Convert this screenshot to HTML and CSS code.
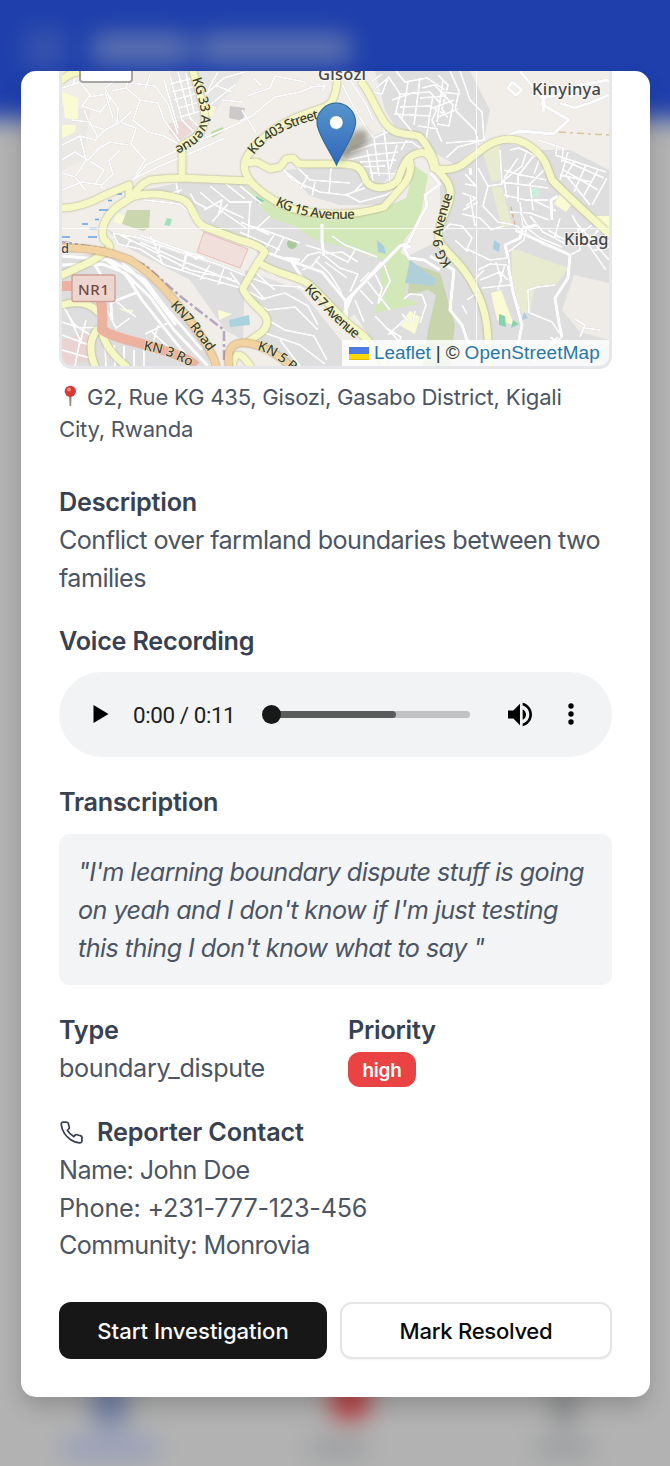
FILE: index.html
```html
<!DOCTYPE html>
<html lang="en">
<head>
<meta charset="utf-8">
<title>Report details</title>
<link rel="stylesheet" href="styles.css">
</head>
<body>
<div class="screen">
  <div class="backdrop" aria-hidden="true">
    <div class="app-header"><span class="ghost-logo"></span><span class="ghost-word short"></span><span class="ghost-word"></span></div>
    <div class="app-body"></div>
    <div class="app-nav">
      <div class="tab active"><i></i><b></b></div>
      <div class="tab alert"><i></i><b></b></div>
      <div class="tab"><i></i><b></b></div>
    </div>
  </div>

  <main class="modal">
    <div class="map">
      <svg class="tiles" viewBox="62 71 547 295" preserveAspectRatio="none">
        <rect x="62" y="71" width="547" height="295" fill="#f1eeea"/>
        <!-- built-up areas -->
        <g fill="#dfdedf">
          <path d="M170 71L245 71 236 84 220 104 210 120 180 140 172 120z" opacity=".5"/>
          <path d="M375 71H470L490 110 484 140 455 165 430 150 400 135 385 110z"/>
          <path d="M62 105L90 110 84 160 62 170z" opacity=".3"/>
          <path d="M145 190L182 182 245 184 262 196 290 216 255 245 205 222 190 200z"/>
          <path d="M285 170L335 166 362 172 370 188 405 180 380 205 340 205 310 196z"/>
          <path d="M340 152L390 128 425 142 410 156 396 170 378 188 352 165z"/>
          <path d="M440 175L500 142 540 150 570 150 609 170V366H430L440 300 400 260 440 240z"/>
          <path d="M107 230L245 275 243 340 225 330 190 280 120 244z"/>
          <path d="M240 216L290 220 345 240 390 262 382 300 345 320 300 280 262 262z"/>
          <path d="M245 270L300 290 345 345 342 366H295L255 340 268 320 244 292z"/>
          <path d="M62 258L105 252 150 280 205 340 210 366H62z"/>
          <path d="M345 300L385 240 405 262 440 300 430 345H375z"/>
        </g>
        <path d="M574 275L609 283V340L580 332 562 310z" fill="#efece7"/>
        <!-- parks, fields, water -->
        <g fill="#d3e8b8">
          <path d="M244 186L275 206 320 217 370 214 406 198 415 166 428 175 420 220 404 240 398 264 375 258 340 246 315 240 295 226 270 218z"/>
          <path d="M398 252L410 258 404 298 420 304 374 313 382 290 380 270z"/>
        </g>
        <path d="M410 263L440 273 445 290 455 325 450 366H423L428 330 436 295 428 290 408 295z" fill="#c8d4ab"/>
        <path d="M410 260L436 279 434 286 405 283z" fill="#b0d0d9"/>
        <path d="M482 150L500 143V180L492 182zM491 185L502 188 512 225 502 228zM512 248L568 268 556 285 535 286 530 312 522 315 512 280z" fill="#e9ebd0"/>
        <g fill="#fafbd3"><path d="M62 92L78 98 78 120 65 118zM62 125H76L75 132 62 138zM204 103L216 107 212 117 203 115zM560 194L571 205 566 212 554 204zM593 216H609V232zM491 293L501 290 514 325 497 320zM410 311L420 317 415 334 399 325zM118 308L133 310 132 315zM116 213L126 216 125 225 114 222zM218 310L232 314 219 320z"/></g>
        <path d="M169 123L190 119 194 130 178 142 169 132z" fill="#ecd8d7"/>
        <path d="M204 232L248 249 240 268 197 252z" fill="#f0dfda" stroke="#ecbdb7"/>
        <path d="M62 340L88 330 94 360 62 366z" fill="#e9d4d2"/>
        <path d="M127 210L150 210 149 228 143 231 122 224z" fill="#c9d6ae"/>
        <path d="M230 106L245 108 243 121 229 118z" fill="#ccc9c8"/>
        <path d="M211 132L223 127 224 131 212 138z" fill="#b9dba0"/>
        <path d="M229 320L249 315 250 325 230 327z" fill="#aad2dd"/>
        <g fill="#86d4ad"><path d="M499 314L505 316 506 327 499 325zM513 320L519 324 511 328zM256 196L265 201 257 203z"/><circle cx="535" cy="193" r="5" fill="#cceedd"/><circle cx="292" cy="244" r="5" fill="#a9c99a"/><path d="M167 218L172 219 170 226 164 225z" fill="#a4dfbd"/></g>
        <path d="M377 240L384 246 386 254 378 252zM494 240L500 244 499 252 493 249zM524 312L528 318 522 320z" fill="#a8cddd"/>
        <g stroke="#63a3e6" stroke-width="1.6"><path d="M117 194H122M108 200.500H112M99 210H110M95 219.500H99M82 224H88M90 228.500H97M62 237H70M88 237H97"/></g>
        <!-- local streets -->
        <g class="streets">
          <path d="M62 88L80 82 90 95 82 106 100 112 110 100 105 88 118 78M78 71L72 86M88 97L108 94 118 108 117 122 106 130 90 125 84 110"/>
          <path d="M62 145L80 136 95 140 105 130 120 122 136 128 131 144 145 160 132 181M62 160L75 152 88 160 99 148 110 142 128 145M72 120L90 122 98 138M80 136L86 160 75 177 62 173"/>
          <path d="M62 190L82 182 102 185 113 174 109 161 120 150M90 161L104 170 95 184M75 177L86 191M100 186L109 192M132 181L146 165 184 147 228 128 250 118M135 178L160 166 198 150 225 138"/>
          <path d="M130 72L126 88 112 91M126 88L140 100 158 103 164 120 180 142M140 100L133 120 148 132 164 136 182 146M131 83L155 86 168 104 178 134M145 90L150 74M105 92L113 118M120 122L132 111"/>
          <path d="M170 76L182 120 194 132M178 72L190 118 200 128M186 73L194 112M164 80L178 128M170 84L194 78M172 92L196 86M174 100L198 93M178 108L200 102M180 117L201 111"/>
          <path d="M205 95L224 78 245 72M210 105L236 84M208 90L218 72M215 85L232 92M222 100L242 102M240 121L252 116 263 107M247 96L270 88 275 76 305 82M262 86L253 78M242 110L256 133M262 107L275 97 300 92 320 84"/>
          <path d="M342 84L350 100 358 114 366 128 374 138M350 80L366 104 373 120M376 88L388 78 382 94 373 92M371 82L382 74M310 87L325 86 322 92"/>
          <path d="M388 76L400 94 430 92 440 103 432 120 442 142M396 71L405 82 427 78 445 90M400 107L430 106 444 114M394 114L430 116M392 100L415 92M400 94L396 112 414 134M408 82L402 120M420 78L414 125M433 95L426 140M450 71L459 91 455 110 475 130 479 145M460 71L470 100 482 112 484 140M438 75L448 85 442 109 448 118"/>
          <path d="M434 84L453 105 449 126 437 124M433 108L454 100M438 117L458 109M440 92L460 94M443 80L437 122M446 158L458 147 484 140M446 143L484 140M420 98L446 96M422 88L438 84M418 126L438 129"/>
          <path d="M351 152L374 144 412 142 428 154M348 160L370 155 398 152M352 167L385 166M374 138L379 176M384 130L390 182M367 150L373 181M397 145L390 169M407 140L401 150M360 162L396 160M370 173L400 174M374 138L396 128 411 134"/>
          <path d="M281 166L292 180 320 192 345 195 365 188M294 164L310 180 350 183M300 190L308 175M329 194L331 168M286 172L306 188M315 182L312 196M345 194L360 202 386 195 402 186M355 191L365 180"/>
          <path d="M145 200L180 204 195 218M160 197L182 190M190 193L195 202 206 208M176 182L178 193 174 200M200 192L215 205 244 218M210 186L230 202 252 202M204 210L222 200 218 216M212 222L228 204M220 210L246 228M226 184L245 199M240 186L262 204M270 216L257 228 245 224M250 203L248 240M240 232L280 250M241 222L270 235M274 235L263 252M284 237L274 256M258 228L300 243"/>
          <path d="M113 233L118 244 140 249 165 265 205 278 248 290M113 233L140 238 180 252 220 265 244 275M120 235L145 247 190 270 232 279M150 235L157 250 163 265M160 245L158 257M186 252L183 269M197 260L188 252 182 270M210 265L200 280M224 268L218 285M230 272L245 292M130 240L126 248M140 235L170 246 205 258M140 242L180 260 236 282"/>
          <path d="M300 264L308 255 320 252 340 268 358 274 350 292M306 245L325 251 348 262 355 250M315 260L330 274 340 290 345 302M322 254L342 252 358 262M320 256L312 266 302 270M325 262L347 278M332 236L345 245 377 257"/>
          <path d="M375 274L382 288 378 303M360 290L373 304M367 281L390 310M355 300L364 322M370 272L360 282M384 264L390 281 378 304M404 299L410 294 422 295 426 305 420 323M402 314L409 322M386 328L401 337 396 348M388 335L404 320M375 316L398 340M415 311L413 322"/>
          <path d="M62 305L75 325 95 338M62 322L80 328 104 327M66 310L80 340 75 366M62 335L92 346M62 350L90 358M86 320L80 344M107 310L116 328 130 318M115 300L124 308 136 317M145 334L170 322M105 345L106 366M114 345L115 366M124 346V366M134 350V366M144 350V366M154 340L158 325M152 332L180 358"/>
          <path d="M244 275L270 285 300 287 325 302 334 320M242 288L262 299 285 293 308 306 318 325M255 272L275 290M244 297L268 310 295 307 318 330M268 320L285 330 314 336 327 360M262 332L300 345 325 364M265 270L276 277M280 340L300 366M250 282L265 300"/>
          <path d="M478 168L488 186 502 184 500 150M488 186L483 206 498 222 515 225M465 174L476 186 465 184M462 193L476 198 466 206M463 210L478 202M510 150L519 148 540 158M527 150L522 166 504 180 507 198M518 158L504 178M535 154L518 176 518 202M540 158L534 174M546 168L530 184 533 210M502 182L548 188M504 195L526 200 548 200M520 202L523 228M533 200L556 211M510 212L530 213 549 220M504 170L517 174 546 180"/>
          <path d="M538 140L563 148 562 162M555 155L606 172M563 160L604 178M562 169L598 190M574 162L566 175 590 205M586 165L574 192M598 170L583 197M607 178L592 205M560 175L592 182M568 152L560 180M557 146L556 154"/>
          <path d="M515 225L525 232 542 244 570 255 580 250 578 228M523 225L540 238 562 247M530 216L543 232 566 244M520 212L527 225 524 240 508 252 512 290 520 310M548 230L565 240M560 218L555 236 576 242M572 215L582 232 592 225M580 246L606 225M574 220L609 260M583 237L606 270M590 241L598 229M604 245L609 240M592 251L609 247"/>
          <path d="M440 235L450 224 462 226 472 238 467 249 490 260 508 258M470 195L475 226M462 214L480 218 492 230M490 230L504 226M455 240L468 252M478 270L490 264 507 265M480 280L500 272 508 280M482 288L510 285M496 262L502 282M505 264L498 290M472 282L484 270M467 300L480 291M462 305L467 314"/>
          <path d="M529 313L528 290 538 287 555 285M530 313L552 322 562 337 548 349M580 337L585 325 575 319M582 350L594 346M585 328L600 330M558 337L540 355 532 362M545 347L570 345 596 344M550 337L582 358"/>
        </g>
        <g class="streets wide">
          <path d="M62 265L102 264 125 273 150 297 174 330 208 366M62 256L110 260 145 280 162 303 202 350M104 258L126 275 142 300 180 348 195 366M122 262L145 284 176 325M95 265L110 290 112 320M112 302L138 292"/>
          <path d="M265 252L302 265 322 272 345 300 347 318M300 260L285 258M345 302L400 246 408 243M411 246L404 248 409 258 424 260 440 270M342 318L352 296 382 262M292 262L302 278M430 256L454 270 450 310 462 325 467 340 480 353"/>
          <path d="M506 136L520 131 553 134 569 120 545 106 542 94M542 100L544 112M512 82L522 90 516 95 508 88zM520 71L542 98 560 94 574 88M560 103L575 108 590 103 609 95M570 98L580 85 609 80"/>
          <path d="M508 258L505 245 520 238 523 228 537 225M508 265L513 292 522 325 517 350M515 230L570 255 568 278 555 298 559 323 562 337M408 243L421 216 427 206 425 195 440 184 430 172"/>
          <path d="M322 224V242L324 256M552 220L551 200 558 196M470 168L471 175"/>
        </g>
        <path d="M62 242L100 248 145 265 180 296 224 330 224 360" fill="none" stroke="#b5a8be" stroke-width="2.500" stroke-dasharray="10 3 3 3"/>
        <path d="M559 132L609 135" stroke="#d8c49a" stroke-width="1.500" stroke-dasharray="7 4 3 4"/>
        <path d="M511 207L515 225" stroke="#d8b58a" stroke-width="1.500" stroke-dasharray="4 3"/>
        <!-- main roads -->
        <g class="road yellow">
          <path d="M62 208C78 208 92 202 103 196L129 185V197"/>
          <path d="M62 275L90 262 106 252Q114 246 104 240 98 222 118 206L132 197Q140 184 150 180 165 178 182 178L250 181"/>
          <path d="M132 197C150 191 172 196 182 199 195 205 192 221 205 227L240 240Q260 245 265 252L258 262 243 288Q242 293 262 312 272 322 262 332L248 342"/>
          <path d="M258 262C275 274 297 276 307 283 320 292 330 308 352 327 368 338 378 350 385 366"/>
          <path d="M193 71C198 90 205 105 205 119 204 133 193 140 182 145V178"/>
          <path d="M337 83Q335 103 325 107C297 116 276 124 256 145 244 158 240 166 250 181 262 194 279 205 300 211 332 216 362 214 384 207L404 184Q412 174 410 162"/>
          <path d="M245 163L257 162 270 169 280 167 286 159 293 158 299 164H336C358 163 362 168 366 181 375 193 393 187 398 180 404 161 409 155 419 153Q430 150 434 168"/>
          <path d="M362 83C370 92 378 115 386 124 396 138 412 132 420 137 428 146 434 158 436 168 446 180 452 184 450 198 448 212 434 228 440 243 450 256 466 268 476 290 487 312 489 330 488 366"/>
          <path d="M434 168Q450 172 462 165L485 147Q505 134 525 143C547 156 547 168 552 180 566 195 590 216 609 234"/>
          <path d="M62 305Q86 298 98 312M97 330Q86 344 95 366M102 332Q106 350 126 366"/>
          <path d="M232 366Q236 344 250 366"/>
          <path d="M62 80Q68 74 78 72"/>
        </g>
        <g class="road orange">
          <path d="M62 248C90 247 112 252 130 260 160 278 178 305 197 330 209 347 214 357 216 366"/>
          <path d="M229 366C225 342 240 339 259 346 275 352 284 360 290 366"/>
        </g>
        <path class="trunk" d="M62 286H96Q104 300 102 330C118 340 140 342 156 348 174 353 190 360 196 366"/>
        <!-- tile seams -->
        <path d="M62 228.500H609M476.500 71V366" stroke="#fff" stroke-width="1" opacity=".8"/>
        <defs>
          <path id="kg33" d="M192 79C196 92 201 104 201 116 201 132 191 141 172 148"/>
          <path id="kg403" d="M254 155C265 139 290 125 323 118"/>
          <path id="kg15" d="M275 205C300 218 332 221 362 218"/>
          <path id="kg7" d="M304 290C318 303 330 320 362 344"/>
          <path id="kg9" d="M452 263C437 248 441 226 456 186"/>
          <path id="kn7" d="M170 306C183 319 195 332 214 360"/>
          <path id="kn3" d="M143 350C165 353 179 360 200 372"/>
          <path id="kn5" d="M257 350C271 353 281 362 300 378"/>
          <linearGradient id="pin" x1="0" y1="0" x2="0" y2="1"><stop stop-color="#5795cb"/><stop offset="1" stop-color="#3166bd"/></linearGradient>
        </defs>
        <g class="road-name">
          <text><textPath href="#kg33" textLength="82">KG 33 Avenue</textPath></text>
          <text><textPath href="#kg403" textLength="76">KG 403 Street</textPath></text>
          <text><textPath href="#kg15" textLength="82">KG 15 Avenue</textPath></text>
          <text><textPath href="#kg7" textLength="71">KG 7 Avenue</textPath></text>
          <text><textPath href="#kg9" textLength="72">KG 9 Avenue</textPath></text>
          <text><textPath href="#kn7" textLength="60">KN7 Road</textPath></text>
          <text><textPath href="#kn3">KN 3 Ro</textPath></text>
          <text><textPath href="#kn5">KN 5 R</textPath></text>
        </g>
        <g class="place">
          <text x="318" y="80" textLength="48">Gisozi</text>
          <text x="532" y="95" textLength="69">Kinyinya</text>
          <text x="564" y="245" textLength="54">Kibaga</text>
          <text class="small" x="61" y="253">d</text>
        </g>
        <rect x="72" y="275" width="43" height="26.500" rx="2" fill="#edd6d0" stroke="#cfa096" stroke-width="1.400"/>
        <text class="shield" x="78" y="294.500" textLength="31">NR1</text>
        <!-- marker -->
        <path class="pin-shadow" d="M337 163L345 140Q357 125 367 132 371 141 360 150z"/>
        <path d="M336.500 165C332 154 317 134 317 122.500A19.300 19.300 0 0 1 355.600 122.500C355.600 134 341 154 336.500 165z" fill="url(#pin)" stroke="#2f6f9f" stroke-width="1.200"/>
        <circle cx="336.300" cy="122.500" r="6.900" fill="#fff" stroke="#3476ac" stroke-width=".8"/>
      </svg>
      <span class="zoom-control"></span>
      <div class="attribution">
        <svg width="20" height="13" viewBox="0 0 20 13"><path fill="#4c7be1" d="M0 0h20v7H0z"/><path fill="#ffd500" d="M0 7h20v6H0z"/><path fill="#e0bc00" d="M0 12h20v1H0z"/></svg>
        <a>Leaflet</a><span>|</span><span>©</span><a class="osm">OpenStreetMap</a>
      </div>
    </div>

    <p class="address"><svg class="pushpin" viewBox="0 0 22 22"><path d="M10 11h2.600l-.5 10h-1.500z" fill="#9a8781"/><circle cx="11.300" cy="6.300" r="5.600" fill="#d83a35"/><circle cx="10" cy="4.500" r="2" fill="#f08a83"/></svg> G2, Rue KG 435, Gisozi, Gasabo District, Kigali<br>City, Rwanda</p>

    <section class="description">
      <h4>Description</h4>
      <p>Conflict over farmland boundaries between two<br>families</p>
    </section>

    <section class="voice">
      <h4>Voice Recording</h4>
      <div class="player">
        <svg class="play" viewBox="0 0 16 18"><path d="M.5 0L15.500 9 .5 18z"/></svg>
        <span class="time">0:00 / 0:11</span>
        <div class="track"><div class="buffered"></div><span class="thumb"></span></div>
        <svg class="volume" viewBox="3 3 18 18"><path d="M3 9v6h4l5 5V4L7 9H3zm13.500 3c0-1.770-1.020-3.290-2.500-4.030v8.050c1.480-.73 2.500-2.250 2.500-4.020zM14 3.230v2.060c2.890.86 5 3.540 5 6.710s-2.110 5.850-5 6.710v2.060c4.010-.91 7-4.490 7-8.770s-2.990-7.860-7-8.770z"/></svg>
        <svg class="more" viewBox="0 0 6 22"><circle cx="3" cy="3" r="2.700"/><circle cx="3" cy="11" r="2.700"/><circle cx="3" cy="19" r="2.700"/></svg>
      </div>
    </section>

    <section class="transcription">
      <h4>Transcription</h4>
      <p class="quote">"I'm learning boundary dispute stuff is going<br>on yeah and I don't know if I'm just testing<br>this thing I don't know what to say "</p>
    </section>

    <section class="facts">
      <div><h4>Type</h4><p class="type">boundary_dispute</p></div>
      <div><h4>Priority</h4><span class="badge">high</span></div>
    </section>

    <section class="contact">
      <h4><svg viewBox="0 0 24 24"><path d="M22 16.920v3a2 2 0 0 1-2.180 2 19.790 19.790 0 0 1-8.630-3.070 19.500 19.500 0 0 1-6-6 19.790 19.790 0 0 1-3.070-8.670A2 2 0 0 1 4.110 2h3a2 2 0 0 1 2 1.720 12.840 12.840 0 0 0 .7 2.810 2 2 0 0 1-.45 2.110L8.090 9.910a16 16 0 0 0 6 6l1.270-1.270a2 2 0 0 1 2.110-.45 12.840 12.840 0 0 0 2.810.7A2 2 0 0 1 22 16.920z"/></svg>Reporter Contact</h4>
      <p>Name: John Doe</p>
      <p class="phone">Phone: +231-777-123-456</p>
      <p>Community: Monrovia</p>
    </section>

    <div class="actions">
      <button class="primary">Start Investigation</button>
      <button class="outline">Mark Resolved</button>
    </div>
  </main>
</div>
</body>
</html>
```

FILE: styles.css
```css
* { box-sizing: border-box; }
body { margin: 0; font-family: Inter, "Liberation Sans", sans-serif; font-size: 25.2px; line-height: 37.9px; letter-spacing: -0.57px; color: #4b5563; }
h4, p { margin: 0; }
h4 { font-size: 25.2px; font-weight: 600; letter-spacing: -0.22px; color: #374151; }
.screen { position: relative; width: 670px; height: 1466px; padding: 71px 20px 0 21px; overflow: hidden; background: #b2b2b2; }

/* blurred application behind the dialog */
.backdrop { position: absolute; inset: -30px; padding: 0; display: flex; flex-direction: column; filter: blur(12px); background: #b2b2b2; }
.app-header { height: 149px; flex: none; background: #1e3fac; display: flex; align-items: center; padding: 8px 0 0 54px; }
.ghost-logo { width: 42px; height: 42px; border-radius: 10px; background: #3853ad; margin-right: 26px; }
.ghost-word { width: 152px; height: 29px; border-radius: 8px; background: #6175af; }
.ghost-word.short { width: 98px; margin-right: 9px; }
.app-body { flex: 1; margin: 0 24px; background: #b2b2b2; }
.app-nav { height: 117px; display: flex; align-items: flex-start; justify-content: space-between; padding: 0 98px 0 85px; }
.tab { width: 76px; display: flex; flex-direction: column; align-items: center; gap: 12px; }
.tab i { width: 24px; height: 48px; background: #8f9193; border-radius: 8px; }
.tab b { width: 56px; height: 18px; background: #999b9e; }
.tab.active { width: 110px; }
.tab.active i { width: 34px; background: #7381a8; }
.tab.active b { width: 92px; background: #919abb; }
.tab.alert { width: 110px; position: relative; left: -8px; }
.tab.alert i { width: 40px; height: 41px; margin-left: 24px; background: #bc3a3d; border-radius: 18px; }
.tab.alert b { margin-top: 7px; }

.modal { position: relative; height: 1326px; padding: 0 38px; background: #fff; border-radius: 15px; overflow: hidden; box-shadow: 0 12px 24px -4px rgba(0,0,0,.22); display: flow-root; }
.map { position: relative; height: 298px; width: 553px; border: 3px solid #e5e7eb; border-top: 0; border-radius: 0 0 13px 13px; overflow: hidden; }
.tiles { display: block; width: 547px; height: 295px; letter-spacing: 0; }
.streets path { fill: none; stroke: #fcfcfc; stroke-width: 2.1; stroke-linejoin: round; filter: drop-shadow(0 0 .6px #b5b5b5); }
.streets.wide path { stroke-width: 3.4; }
.road path { fill: none; stroke-linecap: round; stroke-linejoin: round; }
.road.yellow path { stroke: #f5f7c4; stroke-width: 7; }
.road.yellow { filter: drop-shadow(0 0 .9px #a5a66f); }
.road.orange path { stroke: #f3d2a2; stroke-width: 7; }
.road.orange { filter: drop-shadow(0 0 .9px #a87838); }
.trunk { fill: none; stroke: #edb1a0; stroke-width: 10; stroke-linejoin: round; }
.road-name { font: 500 13.5px "Noto Sans", sans-serif; fill: #42412f; stroke: #f4f5cc; stroke-width: 1px; paint-order: stroke; }
.place { font: 500 16.5px "Noto Sans", sans-serif; fill: #454545; stroke: #fff; stroke-opacity: .65; stroke-width: 2px; paint-order: stroke; }
.place .small { font-size: 13px; }
.shield { font: 500 15px "Noto Sans", sans-serif; fill: #704b41; }
.pin-shadow { fill: #55543f; opacity: .5; filter: blur(3px); }
.zoom-control { position: absolute; left: 17px; top: -20px; width: 54px; height: 32px; background: #fff; background-clip: padding-box; border: 2px solid rgba(0,0,0,.3); border-radius: 4px; }
.attribution { position: absolute; right: 0; bottom: 0; height: 26px; width: 267px; padding-left: 7px; display: flex; align-items: center; gap: 5px; background: rgba(255,255,255,.8); color: #333; font: 18.9px/26px "Liberation Sans", Arial, sans-serif; letter-spacing: 0; white-space: nowrap; }
.attribution a { color: #2777ab; }
.attribution .osm { letter-spacing: 0.15px; }

.address { margin-top: 13px; font-size: 22.1px; line-height: 31.6px; letter-spacing: -0.23px; white-space: nowrap; }
.pushpin { width: 22px; height: 22px; vertical-align: -2px; }
.description { margin-top: 39px; white-space: nowrap; }
.voice { margin-top: 25px; }
.player { margin-top: 11px; height: 85px; padding: 0 38px 0 34px; display: flex; align-items: center; background: #f1f3f4; border-radius: 43px; }
.play { width: 16px; height: 18px; margin-right: 24px; }
.time { width: 102px; font: 22.4px/26px Roboto, sans-serif; letter-spacing: -0.4px; color: #202020; white-space: nowrap; padding-top: 2px; }
.track { position: relative; width: 199px; height: 7px; margin: 0 38px 0 36px; border-radius: 4px; background: #c1c2c3; }
.buffered { width: 125px; height: 7px; border-radius: 4px; background: #5a5b5b; }
.thumb { position: absolute; left: -9.5px; top: -6px; width: 19px; height: 19px; border-radius: 50%; background: #181818; }
.volume { width: 24px; height: 25px; margin-right: 36px; }
.more { width: 6px; height: 22px; }
.transcription { margin-top: 27px; }
.quote { margin-top: 12px; height: 151px; padding: 20px 19px 18px; border-radius: 10px; background: #f3f4f6; font-style: italic; white-space: nowrap; }
.facts { margin-top: 27px; display: grid; grid-template-columns: 1fr 1fr; gap: 25px; height: 76px; }
.type { letter-spacing: -0.33px; }
.badge { display: block; width: 68px; height: 35px; margin-top: 2px; border-radius: 12px; background: #e94343; color: #fff; font-size: 18.9px; line-height: 37px; font-weight: 600; letter-spacing: -0.2px; text-align: center; }
.contact { margin-top: 26px; }
.contact h4 { display: flex; align-items: center; gap: 13px; letter-spacing: -0.12px; }
.contact svg { width: 25px; height: 25px; fill: none; stroke: #374151; stroke-width: 1.7; stroke-linecap: round; stroke-linejoin: round; }
.phone { letter-spacing: -0.22px; }
.actions { margin-top: 37px; display: flex; gap: 13px; }
button { height: 57px; border: 0; border-radius: 12px; font-family: inherit; font-size: 22.1px; font-weight: 500; letter-spacing: -0.3px; padding: 0; }
.primary { width: 268px; background: #171717; color: #fafafa; letter-spacing: -0.03px; }
.outline { width: 272px; background: #fff; color: #0a0a0a; border: 2px solid #e5e5e5; box-shadow: 0 1px 2px rgba(0,0,0,.06); }
```
